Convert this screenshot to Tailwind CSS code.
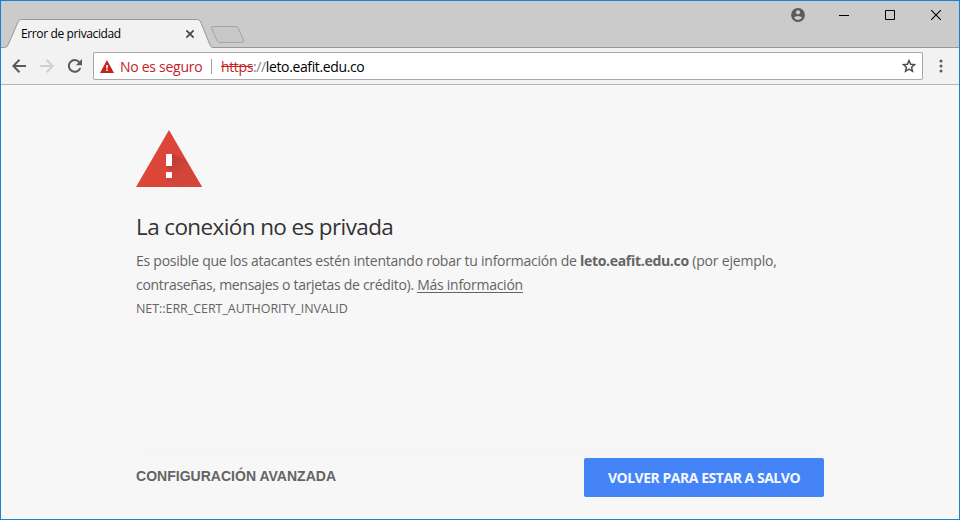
<!DOCTYPE html>
<html lang="es">
<head>
<meta charset="utf-8">
<title>Error de privacidad</title>
<script src="https://cdn.jsdelivr.net/npm/@tailwindcss/browser@4"></script>
</head>
<body class="overflow-hidden font-['Open_Sans','Noto_Sans',sans-serif]">
<div class="flex h-[520px] w-[960px] flex-col overflow-hidden border border-[#1f80cf] bg-[#f7f7f7]">
  <header class="flex h-[47px] shrink-0 justify-between bg-[#cbcbcb] shadow-[inset_0_-1px_0_#979797]">
    <div class="flex">
      <div class="relative mt-[18px] flex h-[29px] w-[212px] items-center pl-5">
        <svg class="absolute inset-0" width="212" height="29" viewBox="0 0 212 29" fill="none">
          <path d="M0 28.500H3.500Q6 28.500 7 26L17 3Q18.200 .5 20.500 .5H196.500Q198.500 .5 199.700 3L209 26Q210 28.500 212 28.500V29H0Z" fill="#f2f2f2"/>
          <path d="M0 28.500H3.500Q6 28.500 7 26L17 3Q18.200 .5 20.500 .5H196.500Q198.500 .5 199.700 3L209 26Q210 28.500 212 28.500" stroke="#979797"/>
        </svg>
        <span class="relative w-[165px] whitespace-nowrap text-[12px] leading-4 tracking-[-0.38px] text-black">Error de privacidad</span>
        <svg class="relative" width="8" height="8" viewBox="0 0 8 8" stroke="#444" stroke-width="1.700"><path d="M.4 .4L7.600 7.600M7.600 .4L.4 7.600"/></svg>
      </div>
      <svg class="-ml-[3px] mt-[24px]" width="36" height="19" viewBox="0 0 36 19"><path d="M3 1.500H25.500Q27.500 1.500 28.500 3.500L33.500 15Q34.500 17.500 32 17.500H10Q8 17.500 7 15.500L1.500 3.500Q.7 1.500 3 1.500Z" fill="#c7c7c7" stroke="#a4a4a4"/></svg>
    </div>
    <div class="flex h-7 items-center pr-[18px]">
      <svg class="mr-[34px]" width="14" height="14" viewBox="0 0 14 14"><circle cx="7" cy="7" r="6.900" fill="#5a5a5a"/><circle cx="7" cy="4.300" r="2.100" fill="#cbcbcb"/><path d="M2.800 9.600Q4.500 7.900 7 7.900T11.200 9.600Q9.700 12 7 12T2.800 9.600Z" fill="#cbcbcb"/></svg>
      <svg class="mr-[36px]" width="10" height="11" viewBox="0 0 10 11"><path d="M0 5.500H10" stroke="#000"/></svg>
      <svg class="mr-[36px]" width="10" height="10" viewBox="0 0 10 10"><path d="M.5 .5H9.500V9.500H.5Z" fill="none" stroke="#000"/></svg>
      <svg width="10" height="10" viewBox="0 0 10 10" stroke="#000" stroke-width="1.100"><path d="M0 0L10 10M10 0L0 10"/></svg>
    </div>
  </header>

  <nav class="flex h-[37px] shrink-0 items-center border-b border-[#b6b6b6] bg-[#f2f2f2] pl-[11px]">
    <svg width="14" height="14" viewBox="0 0 14 14" fill="none" stroke="#5a5a5a" stroke-width="2"><path d="M14 7H1.500M7.500 .8L1.300 7L7.500 13.200"/></svg>
    <svg class="ml-[14px]" width="14" height="14" viewBox="0 0 14 14" fill="none" stroke="#d0d0d0" stroke-width="2"><path d="M0 7H12.500M6.500 .8L12.700 7L6.500 13.200"/></svg>
    <svg class="ml-[14px]" width="14" height="14" viewBox="0 0 14 14"><path d="M12.300 9A5.900 5.900 0 1 1 11.300 3.100" fill="none" stroke="#5a5a5a" stroke-width="2"/><path d="M14 0V6.200H7.800Z" fill="#5a5a5a"/></svg>
    <div class="ml-[11px] flex h-[28px] w-[830px] items-center rounded-[2px] border border-[#a8a8a8] bg-white pl-[6px] pr-[6px] text-[14px]">
      <svg width="14" height="13" viewBox="0 0 14 13"><path d="M7 0L14 13H0Z" fill="#c5221f"/><path d="M6.200 5H7.800V8.500H6.200ZM6.200 9.600H7.800V11H6.200Z" fill="#fff"/></svg>
      <span class="ml-[6px] w-[91px] whitespace-nowrap tracking-[-0.28px] text-[#c5221f]">No es seguro</span>
      <span class="h-[15px] w-px bg-[#a0a0a0]"></span>
      <span class="ml-[9px] flex-1 whitespace-nowrap tracking-[-0.37px] text-black"><span class="text-[#c5221f] line-through">https</span><span class="text-[#808080]">://</span>leto.eafit.edu.co</span>
      <svg width="14" height="14" viewBox="0 0 14 14"><path d="M7 1.500L8.600 5.200L12.600 5.600L9.600 8.300L10.500 12.300L7 10.200L3.500 12.300L4.400 8.300L1.400 5.600L5.400 5.200Z" fill="none" stroke="#4c4c4c" stroke-width="1.500"/></svg>
    </div>
    <svg class="ml-[16px]" width="4" height="14" viewBox="0 0 4 14" fill="#5a5a5a"><circle cx="2" cy="2" r="1.500"/><circle cx="2" cy="7" r="1.500"/><circle cx="2" cy="12" r="1.500"/></svg>
  </nav>

  <main class="flex flex-1 flex-col pl-[135px] pt-[45px] text-[#646464]">
    <svg width="66" height="57" viewBox="0 0 66 57">
      <defs><linearGradient id="shade" gradientUnits="userSpaceOnUse" x1="33" y1="28" x2="56" y2="51"><stop stop-color="#b93c31"/><stop offset=".5" stop-color="#d04437"/><stop offset="1" stop-color="#d6463a"/></linearGradient></defs>
      <path d="M33 0L66 57H0Z" fill="#db4639"/>
      <path d="M36 24L49 29L66 57H39L30 48L36 42L30 36Z" fill="url(#shade)"/>
      <path d="M30 24H36V36H30ZM30 42H36V48H30Z" fill="#fff"/>
    </svg>
    <h1 class="mt-[24px] whitespace-nowrap text-[22.500px] leading-[32px] tracking-[-0.61px] text-[#333]">La conexión no es privada</h1>
    <p class="mt-[6px] whitespace-nowrap text-[14px] leading-[24px]"><span class="tracking-[-0.25px]">Es posible que los atacantes estén intentando robar tu información de <strong class="tracking-[-0.3px]">leto.eafit.edu.co</strong><span class="tracking-[-0.19px]"> (por ejemplo,</span></span><br><span class="tracking-[-0.3px]">contraseñas, mensajes o tarjetas de crédito). <a class="tracking-[-0.26px] underline underline-offset-2">Más información</a></span></p>
    <div class="mt-px whitespace-nowrap text-[12.500px] leading-[22px] tracking-[-0.05px]">NET::ERR_CERT_AUTHORITY_INVALID</div>
    <div class="mt-[138px] flex w-[688px] items-center justify-between shadow-[0_-12px_24px_#f5f5f5]">
      <span class="-mt-[3px] font-['Liberation_Sans',Arial,sans-serif] text-[14px] font-bold leading-5 tracking-[0.02px]">CONFIGURACIÓN AVANZADA</span>
      <button class="h-[39px] w-[240px] whitespace-nowrap rounded-[2px] bg-[#4584f6] text-[14px] font-bold tracking-[-0.47px] text-[#f4f8ff]">VOLVER PARA ESTAR A SALVO</button>
    </div>
  </main>
</div>
</body>
</html>
